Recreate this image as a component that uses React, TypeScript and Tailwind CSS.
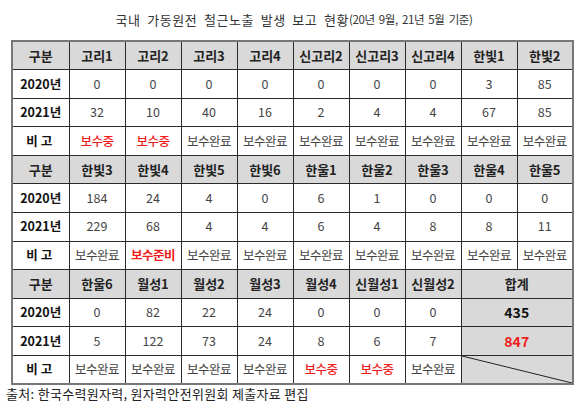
import React from "react";

type Cell = { t: string; red?: boolean; bold?: boolean };

const blocks: { head: string[]; y20: string[]; y21: string[]; note: Cell[] }[] = [
  {
    head: ["고리1", "고리2", "고리3", "고리4", "신고리2", "신고리3", "신고리4", "한빛1", "한빛2"],
    y20: ["0", "0", "0", "0", "0", "0", "0", "3", "85"],
    y21: ["32", "10", "40", "16", "2", "4", "4", "67", "85"],
    note: [
      { t: "보수중", red: true },
      { t: "보수중", red: true },
      { t: "보수완료" },
      { t: "보수완료" },
      { t: "보수완료" },
      { t: "보수완료" },
      { t: "보수완료" },
      { t: "보수완료" },
      { t: "보수완료" },
    ],
  },
  {
    head: ["한빛3", "한빛4", "한빛5", "한빛6", "한울1", "한울2", "한울3", "한울4", "한울5"],
    y20: ["184", "24", "4", "0", "6", "1", "0", "0", "0"],
    y21: ["229", "68", "4", "4", "6", "4", "8", "8", "11"],
    note: [
      { t: "보수완료" },
      { t: "보수준비", red: true, bold: true },
      { t: "보수완료" },
      { t: "보수완료" },
      { t: "보수완료" },
      { t: "보수완료" },
      { t: "보수완료" },
      { t: "보수완료" },
      { t: "보수완료" },
    ],
  },
];

const last = {
  head: ["한울6", "월성1", "월성2", "월성3", "월성4", "신월성1", "신월성2"],
  y20: ["0", "82", "22", "24", "0", "0", "0"],
  y21: ["5", "122", "73", "24", "8", "6", "7"],
  note: [
    { t: "보수완료" },
    { t: "보수완료" },
    { t: "보수완료" },
    { t: "보수완료" },
    { t: "보수중", red: true },
    { t: "보수중", red: true },
    { t: "보수완료" },
  ] as Cell[],
};

const td = "border border-[#2a2a2a] text-center align-middle p-0 h-[28.6px]";
const head = `${td} bg-[#d9d9d9] font-bold text-[13px] text-[#222]`;
const label = `${td} font-bold text-[12.5px] text-[#111]`;
const val = `${td} text-[12.5px] text-[#444]`;

function noteClass(c: Cell) {
  if (c.red) return `${td} text-[12.5px] tracking-[-0.5px] text-[#f01c1c] ${c.bold ? "font-bold" : "font-medium"}`;
  return `${td} text-[12.5px] tracking-[-0.5px] text-[#444]`;
}

export default function App() {
  return (
    <div
      className="w-[580px] h-[411px] bg-white relative overflow-hidden"
      style={{ fontFamily: '"Noto Sans CJK KR", "Noto Sans", sans-serif' }}
    >
      <div className="h-[38px] flex items-center justify-center pl-[8px] pt-[1px]">
        <span className="text-[13px] text-[#333] tracking-[0.6px] [word-spacing:3px]">국내 가동원전 철근노출 발생 보고 현황</span>
        <span className="text-[11.5px] text-[#333] tracking-[-0.4px] [word-spacing:2px]">(20년 9월, 21년 5월 기준)</span>
      </div>
      <div className="pl-[11px] pt-[2px]">
        <table className="table-fixed border-collapse w-[561px] border-2 border-[#777]">
          <colgroup>
            <col className="w-[57px]" />
            {Array.from({ length: 9 }).map((_, i) => (
              <col key={i} className="w-[56px]" />
            ))}
          </colgroup>
          <tbody>
            {blocks.map((b, bi) => (
              <React.Fragment key={bi}>
                <tr>
                  <td className={head}>구분</td>
                  {b.head.map((h, i) => (
                    <td key={i} className={head}>
                      {h}
                    </td>
                  ))}
                </tr>
                <tr>
                  <td className={label}>2020년</td>
                  {b.y20.map((v, i) => (
                    <td key={i} className={val}>
                      {v}
                    </td>
                  ))}
                </tr>
                <tr>
                  <td className={label}>2021년</td>
                  {b.y21.map((v, i) => (
                    <td key={i} className={val}>
                      {v}
                    </td>
                  ))}
                </tr>
                <tr>
                  <td className={`${label} tracking-[3px]`}>비고</td>
                  {b.note.map((c, i) => (
                    <td key={i} className={noteClass(c)}>
                      {c.t}
                    </td>
                  ))}
                </tr>
              </React.Fragment>
            ))}
            <tr>
              <td className={head}>구분</td>
              {last.head.map((h, i) => (
                <td key={i} className={head}>
                  {h}
                </td>
              ))}
              <td colSpan={2} className={head}>
                합계
              </td>
            </tr>
            <tr>
              <td className={label}>2020년</td>
              {last.y20.map((v, i) => (
                <td key={i} className={val}>
                  {v}
                </td>
              ))}
              <td colSpan={2} className={`${td} bg-[#d9d9d9] font-bold text-[14px] text-[#111]`}>
                435
              </td>
            </tr>
            <tr>
              <td className={label}>2021년</td>
              {last.y21.map((v, i) => (
                <td key={i} className={val}>
                  {v}
                </td>
              ))}
              <td colSpan={2} className={`${td} bg-[#d9d9d9] font-bold text-[14px] text-[#f01c1c]`}>
                847
              </td>
            </tr>
            <tr>
              <td className={`${label} tracking-[3px]`}>비고</td>
              {last.note.map((c, i) => (
                <td key={i} className={noteClass(c)}>
                  {c.t}
                </td>
              ))}
              <td colSpan={2} className={`${td} bg-[#d9d9d9] relative`}>
                <svg className="absolute inset-0 w-full h-full" preserveAspectRatio="none" viewBox="0 0 100 100">
                  <line x1="0" y1="0" x2="100" y2="100" stroke="#222" strokeWidth="1" vectorEffect="non-scaling-stroke" />
                </svg>
              </td>
            </tr>
          </tbody>
        </table>
      </div>
      <div className="pl-[6px] pt-0 leading-[18px] text-[13px] text-[#222] tracking-[0.3px]">
        출처: 한국수력원자력, 원자력안전위원회 제출자료 편집
      </div>
    </div>
  );
}
